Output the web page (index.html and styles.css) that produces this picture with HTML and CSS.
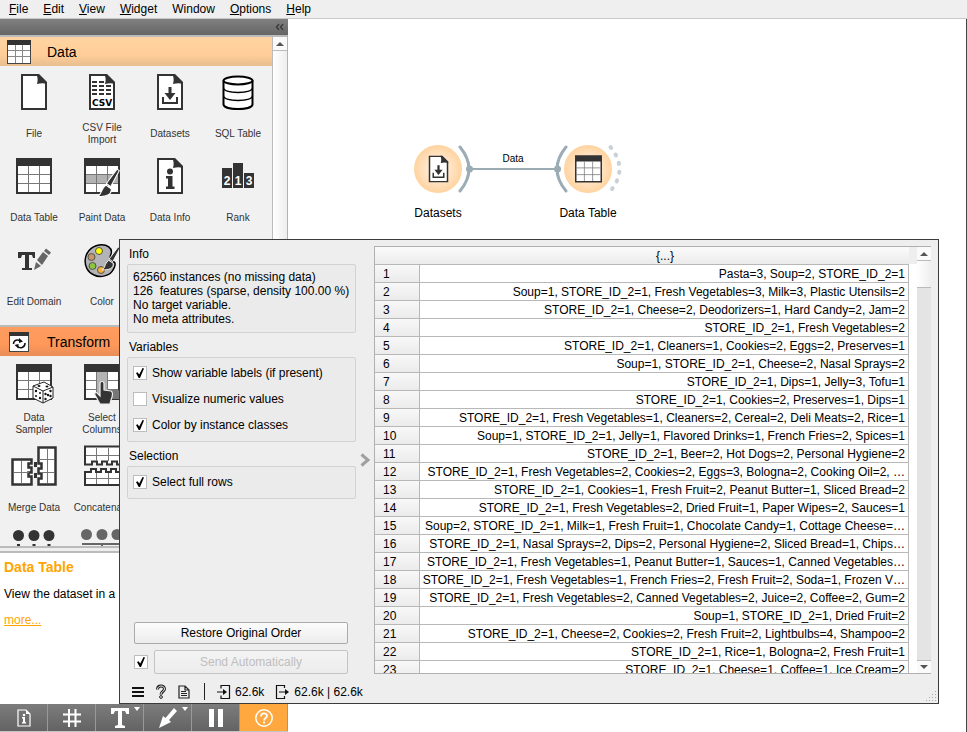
FILE: index.html
```html
<!DOCTYPE html>
<html lang="en">
<head>
<meta charset="utf-8">
<title>Data Table</title>
<link rel="stylesheet" href="styles.css">
</head>
<body>
<svg class="defs" aria-hidden="true">
  <symbol id="grid" viewBox="0 0 36 36"><rect x="1" y="1" width="34" height="34" fill="#fff" stroke="#333" stroke-width="2"/><path d="M0 0h36v8H0z" fill="#333"/><path d="M12.500 8v26M23.500 8v26M2 16.500h32M2 25.500h32" stroke="#777" fill="none"/></symbol>
  <symbol id="page" viewBox="0 0 36 36"><path d="M6 1h16l8 8v26H6z" fill="#fff" stroke="#333" stroke-width="2"/><path d="M20 0c2 3 2 6 1 10 4-1 7-1 10 0V8l-8-8z" fill="#333"/></symbol>
  <symbol id="download" viewBox="0 0 36 36"><use href="#page"/><path d="M16.500 13h3v6h4l-5.500 7-5.500-7h4z" fill="#333"/><path d="M11 23v6h14v-6" fill="none" stroke="#333" stroke-width="2"/></symbol>
  <symbol id="brush" viewBox="0 0 20 28"><path d="M18 1l2 1.500-8 15-4-3z" fill="#333" stroke="#fff" stroke-width="1"/><path d="M7.500 16l5 3.500c1 5-5 8-12.500 7 4-2 2-6 7.500-10.500z" fill="#333" stroke="#fff" stroke-width="1"/></symbol>
</svg>

<nav class="menubar">
  <a href="#"><u>F</u>ile</a><a href="#"><u>E</u>dit</a><a href="#"><u>V</u>iew</a><a href="#"><u>W</u>idget</a><a href="#">Window</a><a href="#"><u>O</u>ptions</a><a href="#"><u>H</u>elp</a>
</nav>

<main class="workspace">
  <aside class="sidebar">
    <div class="dock-title">
      <button aria-label="Collapse"><svg width="9" height="8" viewBox="0 0 9 8"><path d="M4 1L1.500 4 4 7M8 1L5.500 4 8 7" fill="none" stroke="#3c3c3c" stroke-width="1.500"/></svg></button>
    </div>
    <div class="toolbox">
      <div class="tools">
        <button class="category data"><svg width="24" height="24" viewBox="0 0 24 24"><rect x=".5" y=".5" width="23" height="23" fill="#fff" stroke="#444"/><path d="M0 0h24v5H0z" fill="#333"/><path d="M8.500 5v18M15.500 5v18M1 10.500h22M1 16.500h22" stroke="#888"/></svg>Data</button>
        <div class="items">
          <button class="item"><svg><use href="#page"/></svg><span>File</span></button>
          <button class="item"><svg viewBox="0 0 36 36"><use href="#page"/><path d="M8 8h5M8 12h5M15 12h5M22 12h5M8 16h5M15 16h5M22 16h5M8 20h5M15 20h5M22 20h5M15 8h5" stroke="#333" stroke-width="2"/><text x="18" y="32" text-anchor="middle" class="csv">CSV</text></svg><span>CSV File Import</span></button>
          <button class="item"><svg><use href="#download"/></svg><span>Datasets</span></button>
          <button class="item"><svg viewBox="0 0 36 36"><path d="M3.500 6.500v24c1 6 28 6 29 0v-24" fill="#fff" stroke="#000" stroke-width="2"/><ellipse cx="18" cy="6.500" rx="14.500" ry="4" fill="#fff" stroke="#000" stroke-width="2"/><path d="M3.500 14c1 6 28 6 29 0M3.500 22c1 6 28 6 29 0" fill="none" stroke="#000" stroke-width="1.300"/></svg><span>SQL Table</span></button>
          <button class="item"><svg><use href="#grid"/></svg><span>Data Table</span></button>
          <button class="item"><svg viewBox="0 0 36 36"><use href="#grid"/><path d="M2 17h32v8H2z" fill="#b3b3b3"/><path d="M12.500 17v8M23.500 17v8" stroke="#777"/><use href="#brush" x="13" y="10" width="23" height="30"/></svg><span>Paint Data</span></button>
          <button class="item"><svg viewBox="0 0 36 36"><use href="#page"/><circle cx="18" cy="13.500" r="3" fill="#333"/><path d="M14 18h6.500v10.500H22.500V31h-8.500v-2.500h2v-8h-2z" fill="#333"/></svg><span>Data Info</span></button>
          <button class="item"><svg viewBox="0 0 36 36"><path d="M2 10h10v20H2zM13 5h10v25H13zM24 15h10v15H24z" fill="#333"/><text x="7" y="27" text-anchor="middle" class="rank">2</text><text x="18" y="27" text-anchor="middle" class="rank">1</text><text x="29" y="27" text-anchor="middle" class="rank">3</text></svg><span>Rank</span></button>
          <button class="item"><svg viewBox="0 0 36 36"><path d="M2 10h17v6h-2l-1-3h-3v13h3v2H6v-2h3V13H6l-1 3H2z" fill="#333"/><path d="M18 28l2-8 5 4zM21 18l6-8 5 4-6 9zM28 9l2-2.500 5 4-2 2.500z" fill="#666"/></svg><span>Edit Domain</span></button>
          <button class="item"><svg viewBox="0 0 36 36"><path d="M15 3c8-1 14 3 12 9-2 5 0 7 3 8 2 1 1 5-1 8-3 6-13 8-19 5C-3 28-2 6 15 3z" fill="#b3b3b8" stroke="#000" stroke-width="1.500"/><circle cx="15" cy="9" r="3.500" fill="#ff0" stroke="#554"/><circle cx="7.500" cy="15" r="3.500" fill="#c8966e" stroke="#554"/><circle cx="8.500" cy="24" r="3.500" fill="#8bc53f" stroke="#554"/><circle cx="17" cy="28" r="3.500" fill="#fbb03b" stroke="#554"/><use href="#brush" x="18" y="4" width="18" height="25"/></svg><span>Color</span></button>
        </div>
        <button class="category transform"><svg width="20" height="20" viewBox="0 0 20 20"><rect x=".5" y=".5" width="19" height="19" fill="#fff" stroke="#444"/><path d="M0 0h20v4H0z" fill="#333"/><path d="M4.500 12c0-4 4-5 7-3M16 11c0 5-5 6-8 3" fill="none" stroke="#111" stroke-width="1.500"/><path d="M10 6l4 3.500-4 1.500zM9.500 12v4.500L5.500 13z" fill="#111"/></svg>Transform</button>
        <div class="items pair">
          <button class="item"><svg viewBox="0 0 36 36"><use href="#grid"/><g stroke="#222" fill="#fff" stroke-linejoin="round"><path d="M17 22l11-4 9 5v11l-10 5-10-5z"/><path d="M17 22l10 5 10-4M27 27v12" fill="none"/></g><g fill="#111"><ellipse cx="23" cy="22" rx="1.500" ry="1"/><ellipse cx="31" cy="22.500" rx="1.500" ry="1"/><circle cx="20" cy="27" r="1.200"/><circle cx="24" cy="34" r="1.200"/><circle cx="20" cy="32" r="1"/><circle cx="24" cy="29" r="1"/><circle cx="29.500" cy="30" r="1.200"/><circle cx="34.500" cy="27" r="1.200"/><circle cx="32" cy="31" r="1.200"/><circle cx="29.500" cy="35" r="1.200"/><circle cx="34.500" cy="32" r="1.200"/></g></svg><span>Data Sampler</span></button>
          <button class="item"><svg viewBox="0 0 36 36"><use href="#grid"/><path d="M13 8h10v26H13z" fill="#b3b3b3"/><path d="M24 26h11v9H24z" fill="#777"/><path d="M16 19c1-2 3-2 4 0v7l7 1c2 1 2 4 0 9l-1 4H16l-5-9c-1-3 2-3 3-1l2 2z" fill="#333" stroke="#eee" stroke-width="1.200"/></svg><span>Select Columns</span></button>
          <button class="item"><svg viewBox="0 0 36 36"><path d="M-3.500 11.500h19v4h-3v4h3v5h-3v4h3v8h-19z" fill="#fff" stroke="#333" stroke-width="2.500"/><path d="M5.500 13v23M-2 24.500h15" stroke="#777"/><path d="M22.500-.5h17v37h-17v-6h3v-5h-3v-5h3v-5h-3z" fill="#fff" stroke="#333" stroke-width="2.500"/><path d="M31.500 1v34M23 11.500h15M25 24.500h13" stroke="#777"/><path d="M18 14h3v5h-3zM18 25h3v5h-3z" fill="#333"/></svg><span>Merge Data</span></button>
          <button class="item"><svg viewBox="0 0 36 36"><path d="M1-1.500h38v18h-6v-3h-5v3h-5v-3h-5v3h-5v-3H8v3H1z" fill="#fff" stroke="#333" stroke-width="2"/><path d="M12.500 0v13M24.500 0v13M2 7.500h36" stroke="#777"/><path d="M1 24h6v-3h5v3h5v-3h5v3h5v-3h5v3h7v13H1z" fill="#fff" stroke="#333" stroke-width="2"/><path d="M12.500 25v11M24.500 25v11M2 30.500h36" stroke="#777"/></svg><span>Concatenate</span></button>
          <button class="item" aria-label="Select by Data Index"><svg viewBox="0 0 36 36"><g fill="#333"><circle cx="2.500" cy="3.500" r="5.500"/><circle cx="18" cy="3.500" r="5.500"/><circle cx="33" cy="3.500" r="5.500"/><path d="M1 12h3v8H1zM16.500 12h3v8h-3zM31.500 12h3v8h-3z"/></g></svg></button>
          <button class="item" aria-label="Transpose"><svg viewBox="0 0 36 36"><g fill="#666"><circle cx="2.500" cy="2.500" r="5.500"/><circle cx="18" cy="2.500" r="5.500"/><circle cx="33" cy="2.500" r="5.500"/><path d="M-2 11h40v2H-2zM17 12h2v4h-2z"/></g></svg></button>
        </div>
      </div>
      <div class="scroll"><i class="up"></i><i class="thumb"></i></div>
    </div>
    <div class="splitter"></div>
    <section class="help">
      <h3>Data Table</h3>
      <p>View the dataset in a</p>
      <a href="#">more...</a>
    </section>
    <div class="toolbar">
      <button aria-label="Info"><svg width="14" height="18" viewBox="0 0 14 18"><path d="M1 1h8l4 4v12H1z" fill="none" stroke="#fff" stroke-width="1.200"/><path d="M9 1v4h4" fill="#fff"/><circle cx="7" cy="6" r="1.300" fill="#fff"/><path d="M5 8h3v5h1v1.500H5V13h1V9.500H5z" fill="#fff"/></svg></button>
      <button aria-label="Grid"><svg width="18" height="18" viewBox="0 0 18 18"><path d="M6 0v18M12.500 0v18M0 5.500h18M0 12.500h18" stroke="#fff" stroke-width="2"/></svg></button>
      <button aria-label="Text annotation"><svg width="18" height="20" viewBox="0 0 18 20"><path d="M0 0h18v6h-2.500L14 3h-3v14l3 1v2H4v-2l3-1V3H4L2.500 6H0z" fill="#fff"/></svg><i class="drop"></i></button>
      <button aria-label="Arrow annotation"><svg width="18" height="20" viewBox="0 0 18 20"><path d="M15 0l3 3-8 9 2 2-12 6 4-12 2.500 2z" fill="#fff"/></svg><i class="drop"></i></button>
      <button aria-label="Pause"><svg width="14" height="18" viewBox="0 0 14 18"><path d="M0 0h5v18H0zM9 0h5v18H9z" fill="#fff"/></svg></button>
      <button class="active" aria-label="Help"><svg width="18" height="18" viewBox="0 0 18 18"><circle cx="9" cy="9" r="8.200" fill="none" stroke="#fff" stroke-width="1.500"/><path d="M6 7.500c0-4 6-4 6-.5 0 2-3 2-3 4.500M9 12.500v2" fill="none" stroke="#fff" stroke-width="1.800"/></svg></button>
    </div>
  </aside>

  <section class="canvas">
    <svg width="400" height="220" viewBox="288 19 400 220">
      <defs><radialGradient id="node"><stop offset="0" stop-color="#fff3e4"/><stop offset=".5" stop-color="#ffe5c8"/><stop offset="1" stop-color="#ffd39f"/></radialGradient></defs>
      <circle cx="438" cy="169" r="24" fill="url(#node)"/><circle cx="588" cy="169" r="24" fill="url(#node)"/>
      <g fill="none" stroke="#9cacb4" stroke-width="3" stroke-linecap="round"><path d="M460 147q18 22 0 44M566 147q-18 22 0 44"/><path d="M469 169h88" stroke-width="2"/><path d="M610.500 147q18 22 0 44" stroke="#c8d2d6" stroke-width="4" stroke-dasharray="1 8"/></g>
      <circle cx="469.500" cy="169" r="3.500" fill="#9cacb4"/><circle cx="557.500" cy="169" r="3.500" fill="#9cacb4"/>
      <use href="#download" x="425" y="155" width="27" height="28"/><use href="#grid" x="575" y="155" width="27" height="28"/>
      <g text-anchor="middle"><text x="513" y="162" class="link">Data</text><text x="438" y="217">Datasets</text><text x="588" y="217">Data Table</text></g>
    </svg>
  </section>
</main>

<section class="dialog" role="dialog" aria-label="Data Table">
  <div class="content">
    <form class="controls">
      <h4>Info</h4>
      <div class="box info">62560 instances (no missing data)<br>126&nbsp; features (sparse, density 100.00 %)<br>No target variable.<br>No meta attributes.</div>
      <h4>Variables</h4>
      <div class="box checks">
        <label><input type="checkbox" checked>Show variable labels (if present)</label>
        <label><input type="checkbox">Visualize numeric values</label>
        <label><input type="checkbox" checked>Color by instance classes</label>
      </div>
      <h4>Selection</h4>
      <div class="box checks"><label><input type="checkbox" checked>Select full rows</label></div>
      <div class="actions">
        <button type="button" class="push">Restore Original Order</button>
        <div class="send"><input type="checkbox" checked aria-label="Send automatically"><button type="button" class="push" disabled>Send Automatically</button></div>
      </div>
    </form>
    <button class="fold" aria-label="Hide controls"><svg width="10" height="14" viewBox="0 0 10 14"><path d="M1.500 1.500L8 7l-6.500 5.500" fill="none" stroke="#a0a0a0" stroke-width="3"/></svg></button>
    <div class="tableview">
      <div class="rows">
        <table>
          <thead><tr><th colspan="2">{...}</th></tr></thead>
          <tbody>
            <tr><th>1</th><td>Pasta=3, Soup=2, STORE_ID_2=1</td></tr>
            <tr><th>2</th><td>Soup=1, STORE_ID_2=1, Fresh Vegetables=3, Milk=3, Plastic Utensils=2</td></tr>
            <tr><th>3</th><td>STORE_ID_2=1, Cheese=2, Deodorizers=1, Hard Candy=2, Jam=2</td></tr>
            <tr><th>4</th><td>STORE_ID_2=1, Fresh Vegetables=2</td></tr>
            <tr><th>5</th><td>STORE_ID_2=1, Cleaners=1, Cookies=2, Eggs=2, Preserves=1</td></tr>
            <tr><th>6</th><td>Soup=1, STORE_ID_2=1, Cheese=2, Nasal Sprays=2</td></tr>
            <tr><th>7</th><td>STORE_ID_2=1, Dips=1, Jelly=3, Tofu=1</td></tr>
            <tr><th>8</th><td>STORE_ID_2=1, Cookies=2, Preserves=1, Dips=1</td></tr>
            <tr><th>9</th><td>STORE_ID_2=1, Fresh Vegetables=1, Cleaners=2, Cereal=2, Deli Meats=2, Rice=1</td></tr>
            <tr><th>10</th><td>Soup=1, STORE_ID_2=1, Jelly=1, Flavored Drinks=1, French Fries=2, Spices=1</td></tr>
            <tr><th>11</th><td>STORE_ID_2=1, Beer=2, Hot Dogs=2, Personal Hygiene=2</td></tr>
            <tr><th>12</th><td>STORE_ID_2=1, Fresh Vegetables=2, Cookies=2, Eggs=3, Bologna=2, Cooking Oil=2, …</td></tr>
            <tr><th>13</th><td>STORE_ID_2=1, Cookies=1, Fresh Fruit=2, Peanut Butter=1, Sliced Bread=2</td></tr>
            <tr><th>14</th><td>STORE_ID_2=1, Fresh Vegetables=2, Dried Fruit=1, Paper Wipes=2, Sauces=1</td></tr>
            <tr><th>15</th><td>Soup=2, STORE_ID_2=1, Milk=1, Fresh Fruit=1, Chocolate Candy=1, Cottage Cheese=…</td></tr>
            <tr><th>16</th><td>STORE_ID_2=1, Nasal Sprays=2, Dips=2, Personal Hygiene=2, Sliced Bread=1, Chips…</td></tr>
            <tr><th>17</th><td>STORE_ID_2=1, Fresh Vegetables=1, Peanut Butter=1, Sauces=1, Canned Vegetables…</td></tr>
            <tr><th>18</th><td>STORE_ID_2=1, Fresh Vegetables=1, French Fries=2, Fresh Fruit=2, Soda=1, Frozen V…</td></tr>
            <tr><th>19</th><td>STORE_ID_2=1, Fresh Vegetables=2, Canned Vegetables=2, Juice=2, Coffee=2, Gum=2</td></tr>
            <tr><th>20</th><td>Soup=1, STORE_ID_2=1, Dried Fruit=2</td></tr>
            <tr><th>21</th><td>STORE_ID_2=1, Cheese=2, Cookies=2, Fresh Fruit=2, Lightbulbs=4, Shampoo=2</td></tr>
            <tr><th>22</th><td>STORE_ID_2=1, Rice=1, Bologna=2, Fresh Fruit=1</td></tr>
            <tr><th>23</th><td>STORE_ID_2=1, Cheese=1, Coffee=1, Ice Cream=2</td></tr>
          </tbody>
        </table>
      </div>
      <div class="scroll"><i class="up"></i><i class="thumb"></i><i class="down"></i></div>
    </div>
  </div>
  <footer class="status">
    <button aria-label="Menu"><svg width="12" height="12" viewBox="0 0 12 12"><path d="M0 2h12M0 6h12M0 10h12" stroke="#111" stroke-width="2"/></svg></button>
    <button aria-label="Help"><svg width="10" height="14" viewBox="0 0 10 14"><path d="M1.500 4.500C1.500 0 8.500 0 8.500 4c0 2.500-3.500 2.500-3.500 5.500" fill="none" stroke="#222" stroke-width="3"/><path d="M1.500 4.500C1.500 0 8.500 0 8.500 4c0 2.500-3.500 2.500-3.500 5" fill="none" stroke="#eee"/><circle cx="5" cy="12" r="1.400" fill="#eee" stroke="#222"/></svg></button>
    <button aria-label="Report"><svg width="12" height="14" viewBox="0 0 12 14"><path d="M1 1h6l4 4v8H1zM7 1v4h4M3 6.500h5M3 8.500h6M3 10.500h6" fill="none" stroke="#222" stroke-width="1.200"/></svg></button>
    <span class="rule"></span>
    <span class="io"><svg width="13" height="14" viewBox="0 0 13 14"><path d="M4 3.500v-3h8.500v13H4v-3M0 7h8" fill="none" stroke="#111" stroke-width="1.200"/><path d="M6 4l4 3-4 3z" fill="#111"/></svg>62.6k</span>
    <span class="io"><svg width="13" height="14" viewBox="0 0 13 14"><path d="M8.500 3V.5H.5v13h8V11M3 7h8" fill="none" stroke="#111" stroke-width="1.200"/><path d="M9 4l4 3-4 3z" fill="#111"/></svg>62.6k | 62.6k</span>
    <svg class="grip" width="11" height="11" viewBox="0 0 11 11"><path d="M9 0h1v1H9zM9 3h1v1H9zM6 3h1v1H6zM9 6h1v1H9zM6 6h1v1H6zM3 6h1v1H3zM9 9h1v1H9zM6 9h1v1H6zM3 9h1v1H3zM0 9h1v1H0z" fill="#aaa"/></svg>
  </footer>
</section>
</body>
</html>
```
FILE: styles.css
```css
* { box-sizing: border-box; }
html, body { height: 100%; }
body {
  margin: 0;
  display: flex;
  flex-direction: column;
  position: relative;
  overflow: hidden;
  font: 12px/14px "Liberation Sans", Arial, sans-serif;
  color: #000;
  background: #fff;
}
button { font: inherit; color: inherit; border: 0; padding: 0; margin: 0; background: none; }
h3, h4, p { margin: 0; }
svg { display: block; overflow: visible; }
.defs { position: absolute; width: 0; height: 0; }

.menubar {
  flex: none;
  display: flex;
  gap: 15px;
  height: 19px;
  padding: 2px 9px;
  background: #efefef;
  border-bottom: 1px solid #c8c8c8;
}
.menubar a { color: #000; text-decoration: none; }

.workspace { flex: 1; min-height: 0; display: flex; }
.sidebar {
  width: 288px;
  flex: none;
  display: flex;
  flex-direction: column;
  background: #f1f1f1;
}
.dock-title {
  flex: none;
  display: flex;
  justify-content: flex-end;
  align-items: center;
  height: 16px;
  padding-right: 4px;
  background: linear-gradient(#808080, #666);
}
.toolbox {
  flex: 1;
  min-height: 0;
  display: flex;
  border-top: 2px solid #bbb;
  border-right: 1px solid #b0b4b4;
  overflow: hidden;
}
.tools { flex: 1; min-width: 0; }
.category {
  display: flex;
  align-items: center;
  width: 100%;
  padding-left: 7px;
  font-size: 14px;
}
.data { gap: 16px; height: 29px; background: linear-gradient(#ffd4a2, #ffce98 60%, #e8be90); }
.transform { gap: 18px; height: 31px; padding-left: 9px; border-top: 2px solid #bbb; background: linear-gradient(#ff9c60, #ff985a 60%, #e88d58); }
.items { display: grid; grid-template-columns: repeat(4, 68px); grid-auto-rows: 84px; padding-bottom: 7px; }
.pair { grid-template-columns: repeat(2, 68px); }
.item {
  display: flex;
  flex-direction: column;
  align-items: center;
  gap: 8px;
  padding: 8px 6px 0;
  font-size: 10px;
  line-height: 12px;
  color: #333;
}
.item svg { width: 36px; height: 36px; flex: none; }
.item span { display: flex; align-items: center; justify-content: center; height: 32px; text-align: center; }
.csv { font: bold 9px "DejaVu Sans", sans-serif; }
.rank { font: bold 12px "Liberation Sans", sans-serif; fill: #fff; }

.scroll { flex: none; display: flex; flex-direction: column; width: 15px; background: #e4e4e4; border-left: 1px solid #bbb; }
.up, .down { display: grid; place-items: center; height: 13px; background: #fafafa; }
.up::before, .down::before { content: ""; border: 4px solid transparent; border-top-width: 0; border-bottom: 4px solid #555; }
.down::before { transform: rotate(180deg); }
.thumb { flex: 1; border-top: 1px solid #bbb; background: linear-gradient(90deg, #fff, #eee); }

.splitter { flex: none; height: 7px; background: #eee; border: solid #bbb; border-width: 2px 0; }
.help { flex: none; height: 151px; padding: 6px 4px; background: #fff; border-right: 1px solid #c4c4c4; }
.help h3 { font-size: 14px; line-height: 16px; color: orange; }
.help p { margin: 12px 0; line-height: 14px; }
.help a { color: orange; }
.toolbar { flex: none; display: flex; height: 28px; border-bottom: 1px solid #c4c4c4; background: #707070; }
.toolbar button {
  position: relative;
  flex: 1;
  display: grid;
  place-items: center;
  border-right: 1px solid #999;
  background: linear-gradient(#7c7c7c, #636363);
}
.toolbar .active { background: #ffa840; }
.drop { position: absolute; right: 3px; top: 3px; border: 3px solid transparent; border-top: 4px solid #fff; border-bottom: 0; }

.canvas { flex: 1; min-width: 0; overflow: hidden; border-right: 1px solid #444; }
.link { font-size: 10px; }

.dialog {
  position: absolute;
  left: 119px;
  top: 239px;
  right: 28px;
  bottom: 28px;
  display: flex;
  flex-direction: column;
  border: 1px solid #3c3c3c;
  background: #eee;
}
.content { flex: 1; min-height: 0; display: flex; padding: 6px 7px 0; }
.controls { flex: none; width: 229px; display: flex; flex-direction: column; }
.controls h4 { flex: none; font-weight: normal; padding: 1px 2px 3px; height: 18px; }
.box { flex: none; border: 1px solid #d2d2d2; border-radius: 2px; background: #ebebeb; margin-bottom: 6px; }
.info { padding: 5px; height: 69px; white-space: nowrap; }
.checks { display: flex; flex-direction: column; gap: 12px; padding: 8px 5px 9px; }
.checks label { display: flex; align-items: center; gap: 5px; height: 14px; }
input[type="checkbox"] {
  appearance: none;
  flex: none;
  width: 14px;
  height: 14px;
  margin: 0;
  border: 1px solid #bdbdbd;
  background: #fff;
}
input:checked::before {
  content: "";
  display: block;
  width: 8px;
  height: 10px;
  margin: 1px 2px;
  background: #000;
  clip-path: polygon(0 50%, 20% 42%, 40% 66%, 82% 0, 100% 5%, 50% 100%, 34% 100%);
}
.actions { margin-top: auto; padding: 0 8px 0 7px; display: flex; flex-direction: column; gap: 6px; }
.push {
  height: 22px;
  border: 1px solid #ababab;
  border-radius: 2px;
  background: linear-gradient(#fcfcfc, #ececec);
}
.send { display: flex; align-items: center; gap: 6px; }
.send .push { flex: 1; height: 24px; }
.push:disabled { color: #bebebe; border-color: #c4c4c4; background: linear-gradient(#f4f4f4, #ececec); }
.fold { flex: none; width: 18px; display: grid; place-items: center; }

.tableview { flex: 1; min-width: 0; display: flex; border: solid #b0b0b0; border-width: 1px 0 1px 1px; background: #fff; }
.rows { flex: 1; min-width: 0; overflow: hidden; background: linear-gradient(#eee 17px, #fff 17px); padding-right: 8px; }
table { width: 100%; border-collapse: separate; border-spacing: 0; table-layout: auto; }
th, td { height: 18px; padding: 0; border: solid #b8b8b8; border-width: 0 1px 1px 0; white-space: nowrap; font-weight: normal; }
thead th { height: 18px; padding-left: 46px; text-align: center; background: linear-gradient(#fbfbfb, #ebebeb); border-right: 0; }
tbody th { width: 45px; padding-left: 8px; text-align: left; background: linear-gradient(#f8f8f8, #ebebeb); }
td { padding-right: 3px; text-align: right; }
.tableview .scroll { width: 14px; border-left: 0; }
.tableview .thumb { flex: none; height: 28px; border-bottom: 1px solid #bbb; }
.tableview .down { margin-top: auto; border-top: 1px solid #bbb; }

.status { flex: none; position: relative; display: flex; align-items: center; gap: 12px; height: 29px; padding: 6px 12px 0; }
.rule { width: 1px; height: 17px; margin-left: 2px; background: #222; }
.io { display: flex; align-items: center; gap: 5px; }
.grip { position: absolute; right: 1px; bottom: 1px; }
```
